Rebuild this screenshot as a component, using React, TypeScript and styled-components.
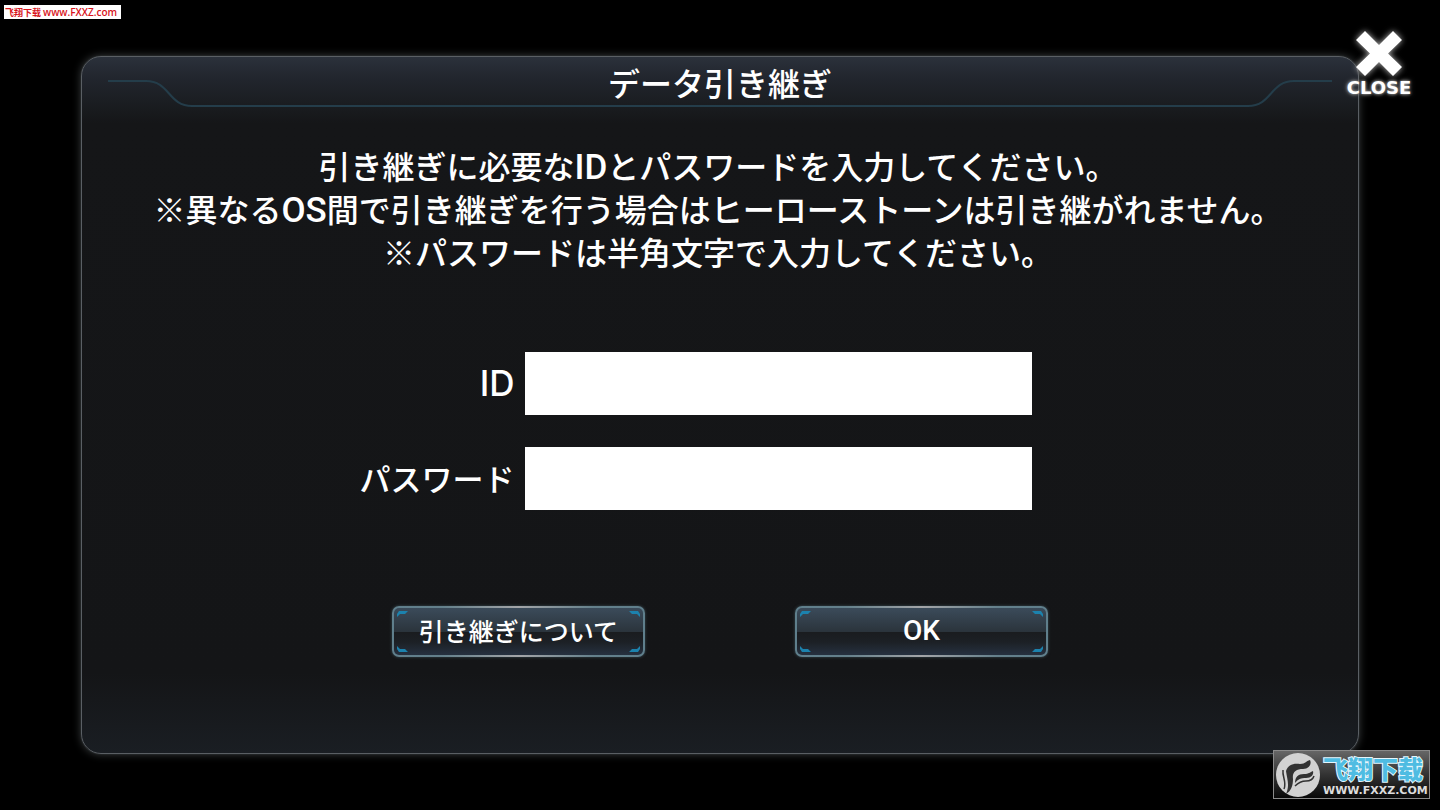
import React from "react";
import styled, { createGlobalStyle } from "styled-components";

const GlobalStyle = createGlobalStyle`
  *, *::before, *::after { box-sizing: border-box; }
  html, body, #root { height: 100%; }
  body {
    margin: 0;
    background: #000;
    color: #fff;
    font-family: "Noto Sans CJK JP", sans-serif;
    font-weight: 500;
  }
`;

const Screen = styled.div`
  position: relative;
  display: flex;
  min-height: 100%;
  padding: 56px 81px;
`;

const Panel = styled.main`
  position: relative;
  flex: 1;
  display: flex;
  flex-direction: column;
  align-items: center;
  border: 1px solid #5a5f64;
  border-radius: 20px;
  background: linear-gradient(
    to bottom,
    #2b313b 0,
    #22262e 20px,
    #1b1e22 44px,
    #151618 66px,
    #141517 calc(100% - 80px),
    #1a1e23 100%
  );
  box-shadow: 0 0 1px #555a5f, 0 0 9px rgba(150, 160, 165, 0.4);
`;

const Header = styled.header`
  display: flex;
  width: 100%;
  height: 52px;
  padding: 0 26px;
`;

const HeaderCurve = styled.svg`
  flex: none;
  width: 84px;
  height: 52px;
  fill: none;
  stroke: #243d4a;
  stroke-width: 2;
`;

const Title = styled.h1`
  flex: 1;
  margin: 0 0 2px;
  border-bottom: 2px solid #243d4a;
  font-size: 32px;
  line-height: 50px;
  font-weight: 500;
  text-align: center;
`;

const Message = styled.p`
  margin: 35px 0 0;
  padding-right: 4px;
  font-size: 32px;
  line-height: 43px;
  text-align: center;
  white-space: nowrap;
`;

const Latin = styled.span`
  font-family: Roboto, sans-serif;
  font-size: 35px;
  line-height: 32px;
`;

const Form = styled.form`
  display: flex;
  flex-direction: column;
  align-items: center;
  margin-top: 79px;
`;

const Fields = styled.div`
  display: flex;
  flex-direction: column;
  gap: 32px;
  padding-right: 96px;
`;

const Field = styled.div`
  display: grid;
  grid-template-columns: 202px 507px;
  column-gap: 10px;
  align-items: center;
`;

const Label = styled.label`
  padding-bottom: 2px;
  font-size: 31px;
  line-height: 48px;
  text-align: right;
  white-space: nowrap;
`;

const LabelLatin = styled.span`
  font-family: Inter, sans-serif;
  font-size: 35px;
`;

const TextInput = styled.input`
  width: 100%;
  height: 63px;
  padding: 0 16px;
  border: 0;
  border-radius: 0;
  background: #fff;
  color: #111;
  font: inherit;
  font-size: 32px;
`;

const Actions = styled.div`
  display: flex;
  gap: 150px;
  margin-top: 96px;
`;

const ButtonFrame = styled.button`
  position: relative;
  width: 253px;
  height: 51px;
  padding: 0 0 3px;
  border: 2px solid transparent;
  border-radius: 7px;
  background:
    linear-gradient(
      to bottom,
      #3b4b5a 0,
      #2b343c 50%,
      #1a1c1f 52%,
      #1c2025 72%,
      #263140 100%
    ) padding-box,
    linear-gradient(to right, #5f7f8c 0, #64808b 20%, #a3a5a8 50%, #64808b 80%, #5f7f8c 100%) border-box;
  box-shadow: 0 0 3px #3d5059;
  color: #fff;
  font: inherit;
  font-size: 25px;
  line-height: 40px;
  cursor: pointer;
`;

const ButtonLatin = styled.span`
  font-family: Roboto, sans-serif;
  font-size: 28px;
`;

const Corner = styled.svg<{ $right?: boolean; $bottom?: boolean }>`
  position: absolute;
  ${(p) => (p.$right ? "right" : "left")}: 2px;
  ${(p) => (p.$bottom ? "bottom" : "top")}: 2px;
  width: 12px;
  height: 7px;
  transform: scale(${(p) => (p.$right ? -1 : 1)}, ${(p) => (p.$bottom ? -1 : 1)});
  fill: #1c82ad;
`;

const CloseButton = styled.button`
  position: absolute;
  top: 28px;
  right: 21px;
  display: flex;
  flex-direction: column;
  align-items: center;
  width: 80px;
  padding: 0;
  border: 0;
  background: none;
  color: #fff;
  font: bold 18px/20px "DejaVu Sans", sans-serif;
  text-shadow: 0 0 3px #aaa, 0 0 5px #888;
  cursor: pointer;

  svg {
    width: 52px;
    height: 50px;
    overflow: visible;
    filter: drop-shadow(0 0 3px #bbb);
  }
`;

const SourceTag = styled.a`
  position: absolute;
  top: 5px;
  left: 4px;
  display: flex;
  gap: 2px;
  width: 117px;
  height: 14px;
  padding-left: 1px;
  background: #fff;
  color: #d8141c;
  font: bold 9px/15px "Noto Sans CJK SC", sans-serif;
  white-space: nowrap;
  text-decoration: none;
`;

const SourceUrl = styled.span`
  font: 600 10px/15px "Open Sans", sans-serif;
`;

const Watermark = styled.a`
  position: absolute;
  right: 10px;
  bottom: 11px;
  display: flex;
  align-items: center;
  gap: 2px;
  width: 157px;
  height: 49px;
  padding-left: 1px;
  border: 1px solid #8a8a8a;
  background: linear-gradient(to bottom, #666 0, #333 50%, #080808 100%);
  text-decoration: none;

  svg {
    flex: none;
    width: 46px;
    height: 46px;
  }
`;

const WatermarkText = styled.span`
  display: flex;
  flex-direction: column;
  padding-top: 1px;
`;

const WatermarkName = styled.span`
  color: #4fbce2;
  font: 900 25px/31px "Noto Sans CJK SC", sans-serif;
  -webkit-text-stroke: 2px #e4f6fd;
  paint-order: stroke fill;
  white-space: nowrap;
`;

const WatermarkUrl = styled.span`
  color: #ddd;
  font: bold 11px/13px "DejaVu Sans", sans-serif;
  white-space: nowrap;
`;

function FrameButton({ type, children }: { type: "button" | "submit"; children: React.ReactNode }) {
  const bracket = <path d="M3 1H12L9 4H4L1 7V4Z" />;
  return (
    <ButtonFrame type={type}>
      <Corner viewBox="0 0 12 7" aria-hidden="true">{bracket}</Corner>
      <Corner $right viewBox="0 0 12 7" aria-hidden="true">{bracket}</Corner>
      <Corner $bottom viewBox="0 0 12 7" aria-hidden="true">{bracket}</Corner>
      <Corner $right $bottom viewBox="0 0 12 7" aria-hidden="true">{bracket}</Corner>
      {children}
    </ButtonFrame>
  );
}

export default function App() {
  return (
    <>
      <GlobalStyle />
      <Screen>
        <Panel>
          <Header>
            <HeaderCurve viewBox="0 0 84 52" aria-hidden="true">
              <path d="M0 24H38C62 24 60 49 84 49" />
            </HeaderCurve>
            <Title>データ引き継ぎ</Title>
            <HeaderCurve viewBox="0 0 84 52" aria-hidden="true">
              <path d="M84 24H46C22 24 24 49 0 49" />
            </HeaderCurve>
          </Header>
          <Message>
            引き継ぎに必要な<Latin>ID</Latin>とパスワードを入力してください。
            <br />
            ※異なる<Latin>OS</Latin>間で引き継ぎを行う場合はヒーローストーンは引き継がれません。
            <br />
            ※パスワードは半角文字で入力してください。
          </Message>
          <Form onSubmit={(e) => e.preventDefault()}>
            <Fields>
              <Field>
                <Label htmlFor="transfer-id">
                  <LabelLatin>ID</LabelLatin>
                </Label>
                <TextInput id="transfer-id" type="text" autoComplete="off" />
              </Field>
              <Field>
                <Label htmlFor="transfer-password">パスワード</Label>
                <TextInput id="transfer-password" type="password" autoComplete="off" />
              </Field>
            </Fields>
            <Actions>
              <FrameButton type="button">引き継ぎについて</FrameButton>
              <FrameButton type="submit">
                <ButtonLatin>OK</ButtonLatin>
              </FrameButton>
            </Actions>
          </Form>
        </Panel>
        <CloseButton type="button">
          <svg viewBox="0 0 52 50" aria-hidden="true">
            <path
              d="M12 3L26 17L40 3L49 12L35 25.500L49 39L40 48L26 34L12 48L3 39L17 25.500L3 12Z"
              fill="#fff"
            />
          </svg>
          CLOSE
        </CloseButton>
        <SourceTag href="#">
          <span>飞翔下载</span>
          <SourceUrl>www.FXXZ.com</SourceUrl>
        </SourceTag>
        <Watermark href="#">
          <svg viewBox="0 0 46 46" aria-hidden="true">
            <circle cx="23" cy="23" r="22" fill="#d2d2d2" />
            <path
              d="M11 19C13 13 18 11 25 12C30 12 31 9 35 8C37 12 34 17 28 17C21 17 17 20 18 27C18 34 16 39 11 42C15 33 12 27 11 19Z"
              fill="#333"
            />
            <path
              d="M20 31C20 25 23 22 29 22C34 22 35 20 38 19C39 23 36 26 31 26C26 26 23 27 20 31Z"
              fill="#333"
            />
            <path
              d="M8 18C7 25 12 30 9 37M20 34C24 30 27 29 31 29C35 29 38 27 39 24"
              fill="none"
              stroke="#333"
              strokeWidth="1.500"
            />
          </svg>
          <WatermarkText>
            <WatermarkName>飞翔下载</WatermarkName>
            <WatermarkUrl>WWW.FXXZ.COM</WatermarkUrl>
          </WatermarkText>
        </Watermark>
      </Screen>
    </>
  );
}
